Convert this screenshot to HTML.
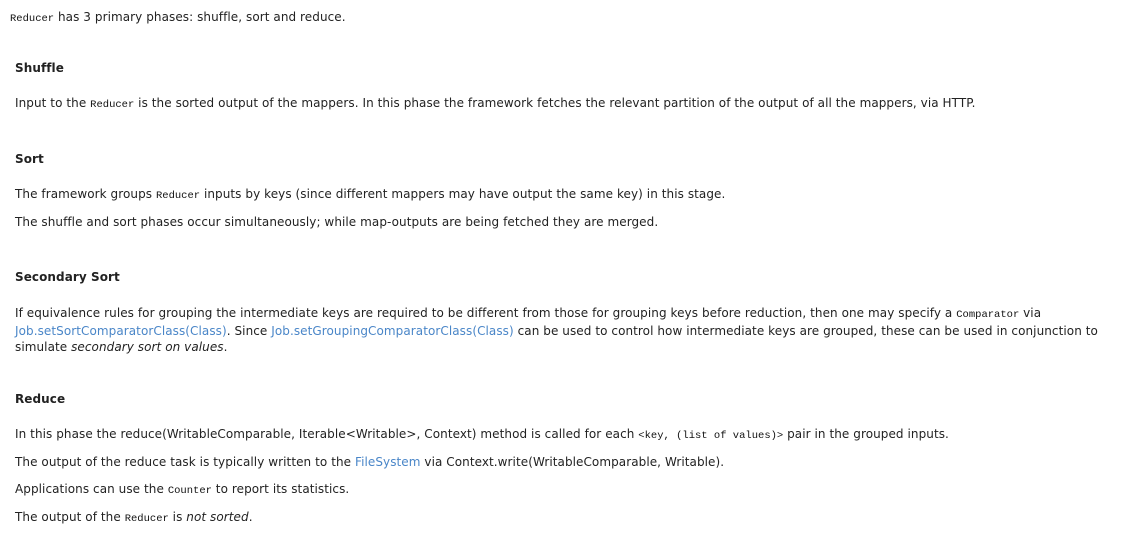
<!DOCTYPE html>
<html><head><meta charset="utf-8"><style>
body{margin:0;background:#fff;width:1135px;height:546px;overflow:hidden;font-family:"DejaVu Sans","Liberation Sans",sans-serif;font-size:12px;color:#222;letter-spacing:0.07px;}
.l{position:absolute;left:15px;line-height:16px;white-space:nowrap;}
h{font-weight:bold;}
code{font-family:"Liberation Mono","DejaVu Sans Mono",monospace;font-size:10.5px;letter-spacing:0;color:#111;}
a{color:#4a86c8;text-decoration:none;}
</style></head><body>
<div class="l" style="left:10px;top:9px"><code>Reducer</code> has 3 primary phases: shuffle, sort and reduce.</div>
<div class="l" style="top:60px"><h>Shuffle</h></div>
<div class="l" style="top:95px">Input to the <code>Reducer</code> is the sorted output of the mappers. In this phase the framework fetches the relevant partition of the output of all the mappers, via HTTP.</div>
<div class="l" style="top:151px"><h>Sort</h></div>
<div class="l" style="top:186px">The framework groups <code>Reducer</code> inputs by keys (since different mappers may have output the same key) in this stage.</div>
<div class="l" style="top:214px">The shuffle and sort phases occur simultaneously; while map-outputs are being fetched they are merged.</div>
<div class="l" style="top:269px"><h>Secondary Sort</h></div>
<div class="l" style="top:305px">If equivalence rules for grouping the intermediate keys are required to be different from those for grouping keys before reduction, then one may specify a <code>Comparator</code> via<br><a>Job.setSortComparatorClass(Class)</a>. Since <a>Job.setGroupingComparatorClass(Class)</a> can be used to control how intermediate keys are grouped, these can be used in conjunction to<br>simulate <i>secondary sort on values</i>.</div>
<div class="l" style="top:391px"><h>Reduce</h></div>
<div class="l" style="top:426px">In this phase the reduce(WritableComparable, Iterable&lt;Writable&gt;, Context) method is called for each <code>&lt;key, (list of values)&gt;</code> pair in the grouped inputs.</div>
<div class="l" style="top:454px">The output of the reduce task is typically written to the <a>FileSystem</a> via Context.write(WritableComparable, Writable).</div>
<div class="l" style="top:481px">Applications can use the <code>Counter</code> to report its statistics.</div>
<div class="l" style="top:509px">The output of the <code>Reducer</code> is <i>not sorted</i>.</div>
</body></html>
